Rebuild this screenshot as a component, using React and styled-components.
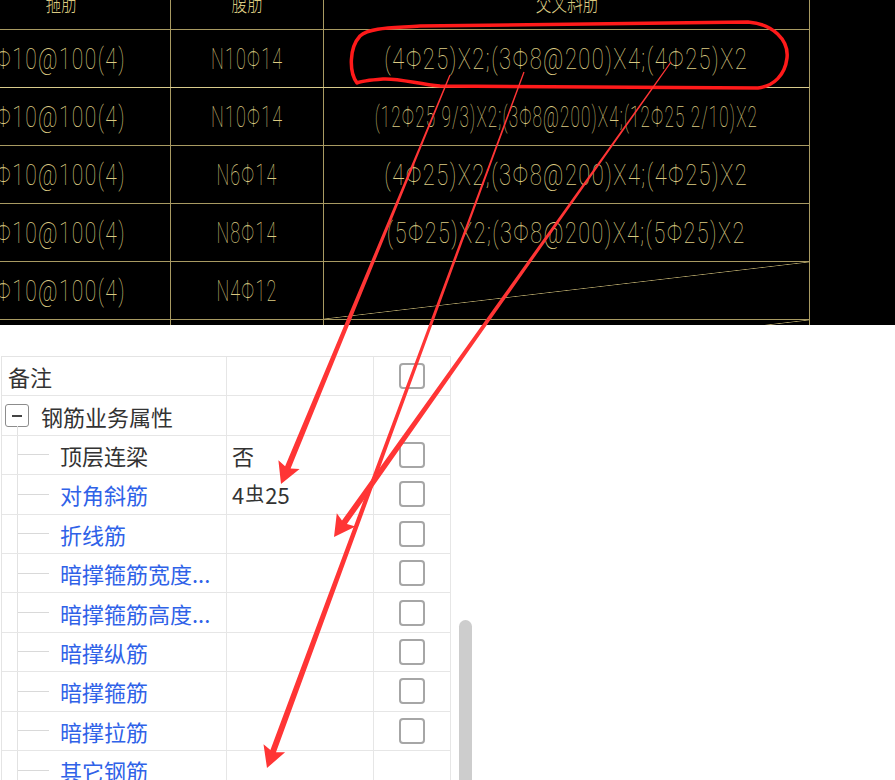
import styled, { createGlobalStyle } from 'styled-components';

const GlobalStyle = createGlobalStyle`
  html, body {
    margin: 0;
    padding: 0;
    background: #fff;
    overflow: hidden;
  }
  body {
    font-family: "Noto Sans CJK SC", "Noto Sans", sans-serif;
  }
`;

const LINE = '#a89a62';

const Page = styled.div`
  position: relative;
  width: 895px;
  height: 780px;
  overflow: hidden;
  background: #fff;
`;

/* ---------- CAD drawing ---------- */

const Drawing = styled.div`
  height: 325px;
  background: #000;
  overflow: hidden;
`;

const Sheet = styled.div`
  width: 810px;
  margin-top: -28px;
  border-right: 1px solid ${LINE};
  box-sizing: border-box;
`;

const CadRow = styled.div`
  display: grid;
  grid-template-columns: 171px 153px 1fr;
  height: 58px;
  box-sizing: border-box;
  border-bottom: 1px solid ${(p) => (p.$bright ? '#d9cb8c' : LINE)};
`;

const CadCell = styled.div`
  display: flex;
  align-items: center;
  justify-content: center;
  min-width: 0;
  padding-right: ${(p) => p.$shift || 0}px;
  border-right: ${(p) => (p.$last ? 'none' : `1px solid ${LINE}`)};
  background: ${(p) =>
    p.$cross
      ? `linear-gradient(to bottom right, transparent calc(50% - 0.7px), ${LINE} 50%, transparent calc(50% + 0.7px))`
      : 'none'};
`;

const CadText = styled.span`
  display: inline-block;
  flex-shrink: 0;
  white-space: nowrap;
  font-family: Roboto, "DejaVu Sans", "Noto Sans CJK SC", sans-serif;
  font-weight: 100;
  font-size: 30px;
  letter-spacing: 2px;
  line-height: 1;
  color: #dccb82;
  transform: scaleX(${(p) => p.$squeeze || 0.73});
`;

const CadTitle = styled(CadText)`
  font-family: "Noto Sans CJK SC", sans-serif;
  font-weight: 300;
  font-size: 24px;
  letter-spacing: 0;
  transform: scaleX(0.65);
`;

const cadRows = [
  { stirrup: 'Φ10@100(4)', waist: 'N10Φ14', cross: '(4Φ25)X2;(3Φ8@200)X4;(4Φ25)X2', bright: true },
  { stirrup: 'Φ10@100(4)', waist: 'N10Φ14', cross: '(12Φ25 9/3)X2;(3Φ8@200)X4;(12Φ25 2/10)X2', squeeze: 0.57 },
  { stirrup: 'Φ10@100(4)', waist: 'N6Φ14', cross: '(4Φ25)X2;(3Φ8@200)X4;(4Φ25)X2' },
  { stirrup: 'Φ10@100(4)', waist: 'N8Φ14', cross: '(5Φ25)X2;(3Φ8@200)X4;(5Φ25)X2', squeeze: 0.72 },
  { stirrup: 'Φ10@100(4)', waist: 'N4Φ12', cross: null },
  { stirrup: '', waist: '', cross: null },
];

function CadTable() {
  return (
    <Drawing>
      <Sheet>
        <CadRow>
          <CadCell $shift={49}><CadTitle>箍筋</CadTitle></CadCell>
          <CadCell><CadTitle>腹筋</CadTitle></CadCell>
          <CadCell $last><CadTitle>交叉斜筋</CadTitle></CadCell>
        </CadRow>
        {cadRows.map((r, i) => (
          <CadRow key={i} $bright={r.bright}>
            <CadCell $shift={49}>{r.stirrup && <CadText $squeeze={0.7}>{r.stirrup}</CadText>}</CadCell>
            <CadCell>{r.waist && <CadText $squeeze={0.6}>{r.waist}</CadText>}</CadCell>
            <CadCell $last $cross={!r.cross}>
              {r.cross && <CadText $squeeze={r.squeeze}>{r.cross}</CadText>}
            </CadCell>
          </CadRow>
        ))}
      </Sheet>
    </Drawing>
  );
}

/* ---------- property grid ---------- */

const PanelArea = styled.div`
  display: flex;
  align-items: flex-start;
  padding: 31px 0 0 1px;
`;

const Grid = styled.div`
  width: 450px;
  border-top: 1px solid #e4e4e4;
  border-left: 1px solid #e4e4e4;
  box-sizing: border-box;
`;

const PropRow = styled.div`
  display: grid;
  grid-template-columns: 225px 147px 77px;
  height: 39.4px;
  box-sizing: border-box;
  border-bottom: 1px solid #e6e6e6;
`;

const NameCell = styled.div`
  display: flex;
  align-items: center;
  min-width: 0;
  padding-left: ${(p) => p.$pad || 0}px;
  border-right: 1px solid #e6e6e6;
  overflow: hidden;
`;

const ValueCell = styled.div`
  display: flex;
  align-items: center;
  padding-left: 5px;
  border-right: 1px solid #e6e6e6;
  font-size: 22px;
  color: #333;
`;

const CheckCell = styled.div`
  display: flex;
  align-items: center;
  justify-content: center;
  border-right: 1px solid #e6e6e6;
`;

const Label = styled.span`
  font-size: 22px;
  white-space: nowrap;
  color: ${(p) => (p.$link ? '#2f62e8' : '#333')};
`;

const Indent = styled.div`
  width: 15px;
  flex-shrink: 0;
`;

const Branch = styled.div`
  align-self: stretch;
  width: 31px;
  flex-shrink: 0;
  border-left: 1px solid #e2e2e2;
  margin-right: 11px;
  background: linear-gradient(#d9d9d9, #d9d9d9) no-repeat left center / 100% 1px;
`;

const ExpandBox = styled.div`
  position: relative;
  width: 24px;
  height: 23px;
  box-sizing: border-box;
  margin: 0 12px 0 3px;
  border: 1.5px solid #8c8c8c;
  border-radius: 3px;
  display: flex;
  align-items: center;
  justify-content: center;

  &::before {
    content: '';
    width: 10px;
    height: 2px;
    background: #444;
  }

  &::after {
    content: '';
    position: absolute;
    left: 10.5px;
    top: 100%;
    width: 1px;
    height: 10px;
    background: #e2e2e2;
  }
`;

const Checkbox = styled.span`
  width: 26px;
  height: 26px;
  box-sizing: border-box;
  border: 2px solid #a6a6a6;
  border-radius: 4px;
  background: #fff;
`;

const RebarMark = styled.span`
  font-size: 19px;
  margin: 0 1px;
  position: relative;
  top: -2px;
`;

const ScrollTrack = styled.div`
  margin-left: 8px;
  width: 13px;
  padding-top: 264px;
`;

const Thumb = styled.div`
  height: 220px;
  background: #cdcdcd;
  border-radius: 7px 7px 0 0;
`;

const children = [
  { name: '顶层连梁', value: '否', check: true },
  { name: '对角斜筋', link: true, value: 'rebar', check: true },
  { name: '折线筋', link: true, check: true },
  { name: '暗撑箍筋宽度...', link: true, check: true },
  { name: '暗撑箍筋高度...', link: true, check: true },
  { name: '暗撑纵筋', link: true, check: true },
  { name: '暗撑箍筋', link: true, check: true },
  { name: '暗撑拉筋', link: true, check: true },
  { name: '其它钢筋', link: true, check: false },
];

function PropertyGrid() {
  return (
    <PanelArea>
      <Grid>
        <PropRow>
          <NameCell $pad={6}><Label>备注</Label></NameCell>
          <ValueCell />
          <CheckCell><Checkbox /></CheckCell>
        </PropRow>
        <PropRow>
          <NameCell>
            <ExpandBox />
            <Label>钢筋业务属性</Label>
          </NameCell>
          <ValueCell />
          <CheckCell />
        </PropRow>
        {children.map((c) => (
          <PropRow key={c.name}>
            <NameCell>
              <Indent />
              <Branch />
              <Label $link={c.link}>{c.name}</Label>
            </NameCell>
            <ValueCell>
              {c.value === 'rebar' ? (
                <>4<RebarMark>虫</RebarMark>25</>
              ) : (
                c.value
              )}
            </ValueCell>
            <CheckCell>{c.check && <Checkbox />}</CheckCell>
          </PropRow>
        ))}
      </Grid>
      <ScrollTrack>
        <Thumb />
      </ScrollTrack>
    </PanelArea>
  );
}

/* ---------- red markup on top ---------- */

const Markup = styled.svg`
  position: absolute;
  top: 0;
  left: 0;
  width: 895px;
  height: 780px;
  pointer-events: none;
`;

function arrowShape([x0, y0], [x1, y1], tail = 1.2, neck = 6, headLen = 21, headW = 23) {
  const dx = x1 - x0;
  const dy = y1 - y0;
  const len = Math.hypot(dx, dy);
  const ux = dx / len;
  const uy = dy / len;
  const nx = -uy;
  const ny = ux;
  const bx = x1 - ux * headLen;
  const by = y1 - uy * headLen;
  const nkx = bx + ux * 3;
  const nky = by + uy * 3;
  const pt = (x, y) => `${x.toFixed(1)},${y.toFixed(1)}`;
  return [
    pt(x0 + (nx * tail) / 2, y0 + (ny * tail) / 2),
    pt(nkx + (nx * neck) / 2, nky + (ny * neck) / 2),
    pt(bx + (nx * headW) / 2, by + (ny * headW) / 2),
    pt(x1, y1),
    pt(bx - (nx * headW) / 2, by - (ny * headW) / 2),
    pt(nkx - (nx * neck) / 2, nky - (ny * neck) / 2),
    pt(x0 - (nx * tail) / 2, y0 - (ny * tail) / 2),
  ].join(' ');
}

const arrows = [
  { from: [450, 75], to: [281, 484] },
  { from: [524, 72], to: [267, 768] },
  { from: [671, 62], to: [334, 537] },
];

function RedMarks() {
  return (
    <Markup viewBox="0 0 895 780">
      <path
        d="M357 83 C349 72 349 48 360 36 C370 27 395 28 420 26 L748 22 C773 24 789 40 787 58 C785 75 774 86 758 88 L440 86 C418 84 398 78 383 79 C370 80 361 81 357 83 Z"
        fill="none"
        stroke="#ff1a1a"
        strokeWidth="3.5"
        strokeLinejoin="round"
      />
      {arrows.map((a, i) => (
        <polygon key={i} points={arrowShape(a.from, a.to)} fill="#ff3535" />
      ))}
    </Markup>
  );
}

export default function App() {
  return (
    <Page>
      <GlobalStyle />
      <CadTable />
      <PropertyGrid />
      <RedMarks />
    </Page>
  );
}
